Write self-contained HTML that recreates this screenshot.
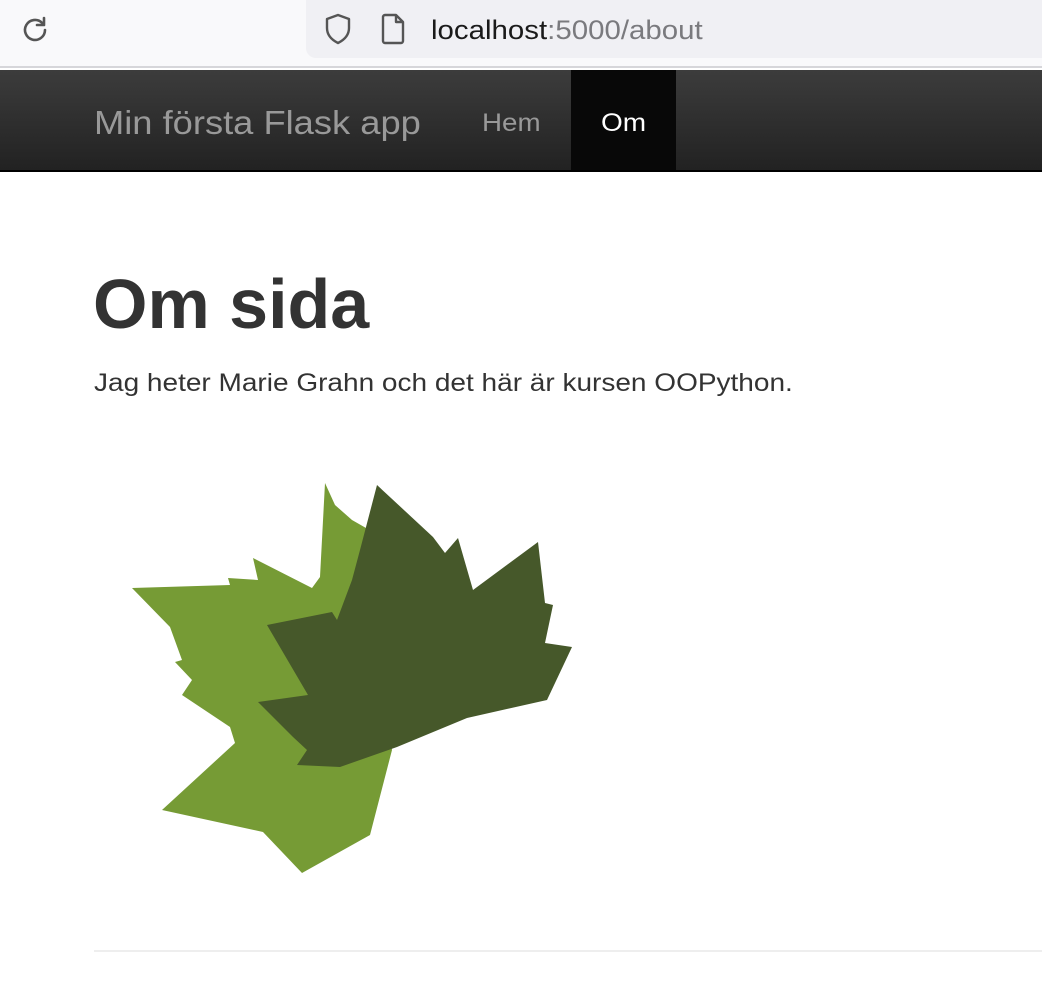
<!DOCTYPE html>
<html><head><meta charset="utf-8"><style>
*{margin:0;padding:0;box-sizing:border-box}
body{width:1042px;height:1000px;overflow:hidden;background:#fff;font-family:"Liberation Sans",Arial,sans-serif;position:relative}
.chrome{position:absolute;left:0;top:0;width:1042px;height:68px;background:#f9f9fb;border-bottom:2px solid #d6d6da}
.url{position:absolute;left:306px;top:0;width:760px;height:58px;background:#f0f0f4;border-radius:0 0 0 10px}
.nav{position:absolute;left:0;top:70px;width:1042px;height:102px;background:linear-gradient(#3c3c3c,#222);border-bottom:2px solid #000}
.abs{position:absolute;white-space:nowrap;transform-origin:0 0}
</style></head><body>
<div class="chrome">
<svg class="abs" style="left:20px;top:14px" width="32" height="32" viewBox="0 0 32 32"><path d="M25 16a10 10 0 1 1-3-7.2" fill="none" stroke="#555" stroke-width="2.6" stroke-linecap="round"/><path d="M24 4v7h-7" fill="none" stroke="#555" stroke-width="2.6" stroke-linejoin="round" stroke-linecap="round"/></svg>
<div class="url"></div>
<svg class="abs" style="left:322px;top:12px" width="32" height="34" viewBox="0 0 32 34"><path d="M16 3L5 7v9c0 7 5 12 11 15 6-3 11-8 11-15V7z" fill="none" stroke="#555" stroke-width="2.4" stroke-linejoin="round"/></svg>
<svg class="abs" style="left:380px;top:12px" width="28" height="34" viewBox="0 0 28 34"><path d="M5 3h11l7 7v19a2 2 0 0 1-2 2H5a2 2 0 0 1-2-2V5a2 2 0 0 1 2-2zM16 3v7h7" fill="none" stroke="#555" stroke-width="2.4" stroke-linejoin="round"/></svg>
<div class="abs" style="left:431px;top:15px;font-size:27px;color:#1a1a1a;transform:scaleX(1.09)">localhost<span style="color:#7a7a7e">:5000/about</span></div>
</div>
<div class="nav">
<div class="abs" style="left:571px;top:0;width:105px;height:100px;background:#080808"></div>
<div class="abs" style="left:94px;top:34px;font-size:33px;color:#999;transform:scaleX(1.1)">Min första Flask app</div>
<div class="abs" style="left:482px;top:39px;font-size:25px;color:#999;transform:scaleX(1.11)">Hem</div>
<div class="abs" style="left:601px;top:39px;font-size:25px;color:#fff;transform:scaleX(1.12)">Om</div>
</div>
<div class="abs" style="left:93px;top:264px;font-size:70px;font-weight:bold;color:#333">Om sida</div>
<div class="abs" style="left:94px;top:369px;font-size:25px;color:#333;transform:scaleX(1.12)">Jag heter Marie Grahn och det här är kursen OOPython.</div>
<svg class="abs" style="left:0;top:0" width="1042" height="1000">
<path fill="#769b35" d="M325,483 L335,505 L352,520 L373,532 L392,750 L370,835 L302,873 L263,832 L162,810 L235,743 L230,727 L182,695 L192,680 L175,662 L182,660 L170,627 L132,588 L230,585 L228,578 L258,580 L253,558 L312,588 L320,577 Z"/>
<path fill="#46582a" d="M377,485 L433,537 L445,553 L458,538 L473,590 L538,542 L545,603 L553,605 L545,643 L572,647 L547,700 L467,718 L397,747 L340,767 L297,765 L307,750 L293,737 L258,702 L308,695 L267,625 L332,612 L337,620 L352,580 L360,550 Z"/>
</svg>
<div class="abs" style="left:94px;top:950px;width:948px;height:2px;background:#eee"></div>
</body></html>
